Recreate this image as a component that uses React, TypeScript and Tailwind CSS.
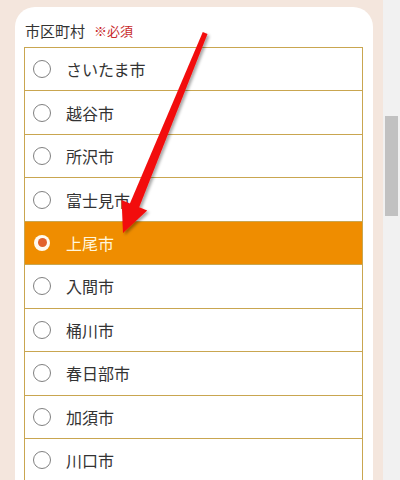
import React from "react";

const cities = [
  "さいたま市",
  "越谷市",
  "所沢市",
  "富士見市",
  "上尾市",
  "入間市",
  "桶川市",
  "春日部市",
  "加須市",
  "川口市",
];

const jp = { fontFamily: '"Noto Sans CJK JP", "Noto Sans", sans-serif' };

export default function App() {
  const selected = "上尾市";
  return (
    <div className="relative flex h-[480px] w-[400px] overflow-hidden bg-[#f4e6dd]" style={jp}>
      <div className="flex-1 pl-[15px] pr-[10px] pt-[7px]">
        <div className="h-[700px] rounded-t-[20px] bg-white pl-[9px] pr-[10px] pt-[14px]">
          <div className="mb-[6px] flex items-center gap-[9px] leading-[20px]">
            <span className="pl-[1px] text-[15px] text-[#333]">市区町村</span>
            <span className="text-[13px] text-[#c8282a]">※必須</span>
          </div>
          <div className="border-x border-[#c9a650]">
            {cities.map((c) => {
              const on = c === selected;
              return (
                <div
                  key={c}
                  className={`flex h-[43.45px] items-center gap-[15px] border-t border-[#c9a650] pl-[8px] ${
                    on ? "bg-[#ef8d00]" : "bg-white"
                  }`}
                >
                  {on ? (
                    <span className="ml-[1px] mr-[1px] flex h-[16px] w-[16px] items-center justify-center rounded-full bg-[#fffaf0]">
                      <span className="h-[9px] w-[9px] rounded-full bg-[#e2622c]" />
                    </span>
                  ) : (
                    <span className="h-[18px] w-[18px] rounded-full border border-[#808080] bg-white" />
                  )}
                  <span className={`text-[16px] leading-none ${on ? "text-[#fff6dc]" : "text-[#333]"}`}>{c}</span>
                </div>
              );
            })}
          </div>
        </div>
      </div>
      <div className="w-[17px] bg-[#f1f1f1] pl-[2px] pr-[2px]">
        <div className="mt-[116px] h-[100px] w-[13px] bg-[#c1c1c1]" />
      </div>
      <svg className="pointer-events-none absolute left-0 top-0" width="400" height="480" viewBox="0 0 400 480">
        <defs>
          <filter id="sh" x="-20%" y="-20%" width="140%" height="140%">
            <feDropShadow dx="2" dy="2" stdDeviation="1.8" floodColor="#000" floodOpacity="0.35" />
          </filter>
        </defs>
        <polygon
          filter="url(#sh)"
          fill="#f20d0d"
          points="207.5,34 202.8,32 129.9,203.4 121.6,200 123,233 147.2,210.5 139.2,207.3"
        />
      </svg>
    </div>
  );
}
